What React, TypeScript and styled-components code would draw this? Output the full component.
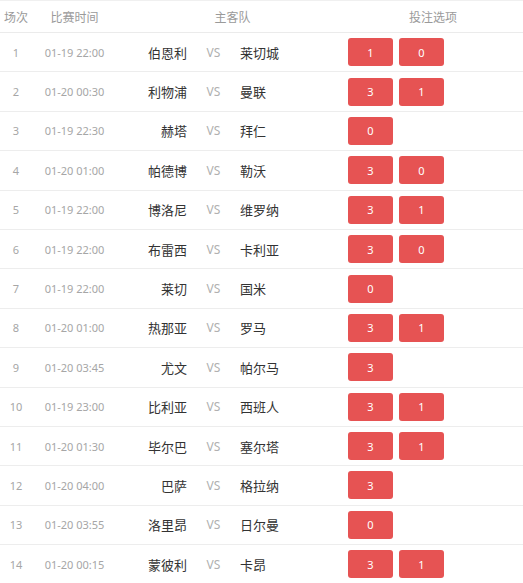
import React from 'react'
import styled, { createGlobalStyle } from 'styled-components'

const Global = createGlobalStyle`
  body {
    margin: 0;
    background: #fff;
    font-family: "Noto Sans", "Noto Sans CJK SC", sans-serif;
  }
`

const Table = styled.div`
  width: 523px;
  border-top: 1px solid #f0f0f0;
`

const HeadRow = styled.div`
  display: flex;
  align-items: center;
  height: 31px;
  border-bottom: 1px solid #ebebeb;
  font-size: 12px;
  color: #9a9a9a;
`

const Row = styled.div`
  display: flex;
  align-items: center;
  height: 39.4px;
  box-sizing: border-box;
  border-bottom: 1px solid #ededed;
`

const Num = styled.div<{ $head?: boolean }>`
  width: 32px;
  text-align: center;
  font-size: ${(p) => (p.$head ? '12px' : '11px')};
  color: ${(p) => (p.$head ? '#9a9a9a' : '#a6a6a6')};
`

const Time = styled.div<{ $head?: boolean }>`
  width: 85px;
  text-align: center;
  font-size: ${(p) => (p.$head ? '12px' : '11px')};
  color: ${(p) => (p.$head ? '#9a9a9a' : '#a6a6a6')};
`

const Teams = styled.div`
  width: 231px;
  text-align: center;
`

const Options = styled.div`
  width: 170px;
  text-align: center;
`

const Home = styled.div`
  width: 70px;
  text-align: right;
  font-size: 13px;
  color: #333;
`

const Vs = styled.div`
  width: 53px;
  text-align: center;
  font-size: 12px;
  color: #b0b0b0;
`

const Away = styled.div`
  width: 108px;
  text-align: left;
  font-size: 13px;
  color: #333;
`

const Btns = styled.div`
  display: flex;
  gap: 6px;
`

const Btn = styled.div`
  width: 45px;
  height: 28px;
  border-radius: 3px;
  background: #e65353;
  color: #fff;
  font-size: 11px;
  display: flex;
  align-items: center;
  justify-content: center;
`

const matches: [string, string, string, string[]][] = [
  ['01-19 22:00', '伯恩利', '莱切城', ['1', '0']],
  ['01-20 00:30', '利物浦', '曼联', ['3', '1']],
  ['01-19 22:30', '赫塔', '拜仁', ['0']],
  ['01-20 01:00', '帕德博', '勒沃', ['3', '0']],
  ['01-19 22:00', '博洛尼', '维罗纳', ['3', '1']],
  ['01-19 22:00', '布雷西', '卡利亚', ['3', '0']],
  ['01-19 22:00', '莱切', '国米', ['0']],
  ['01-20 01:00', '热那亚', '罗马', ['3', '1']],
  ['01-20 03:45', '尤文', '帕尔马', ['3']],
  ['01-19 23:00', '比利亚', '西班人', ['3', '1']],
  ['01-20 01:30', '毕尔巴', '塞尔塔', ['3', '1']],
  ['01-20 04:00', '巴萨', '格拉纳', ['3']],
  ['01-20 03:55', '洛里昂', '日尔曼', ['0']],
  ['01-20 00:15', '蒙彼利', '卡昂', ['3', '1']],
]

const App: React.FC = () => {
  return (
    <>
      <Global />
      <Table>
        <HeadRow>
          <Num $head>场次</Num>
          <Time $head>比赛时间</Time>
          <Teams>主客队</Teams>
          <Options>投注选项</Options>
        </HeadRow>
        {matches.map(([time, home, away, opts], i) => (
          <Row key={i}>
            <Num>{i + 1}</Num>
            <Time>{time}</Time>
            <Home>{home}</Home>
            <Vs>VS</Vs>
            <Away>{away}</Away>
            <Btns>
              {opts.map((o, j) => (
                <Btn key={j}>{o}</Btn>
              ))}
            </Btns>
          </Row>
        ))}
      </Table>
    </>
  )
}

export default App
